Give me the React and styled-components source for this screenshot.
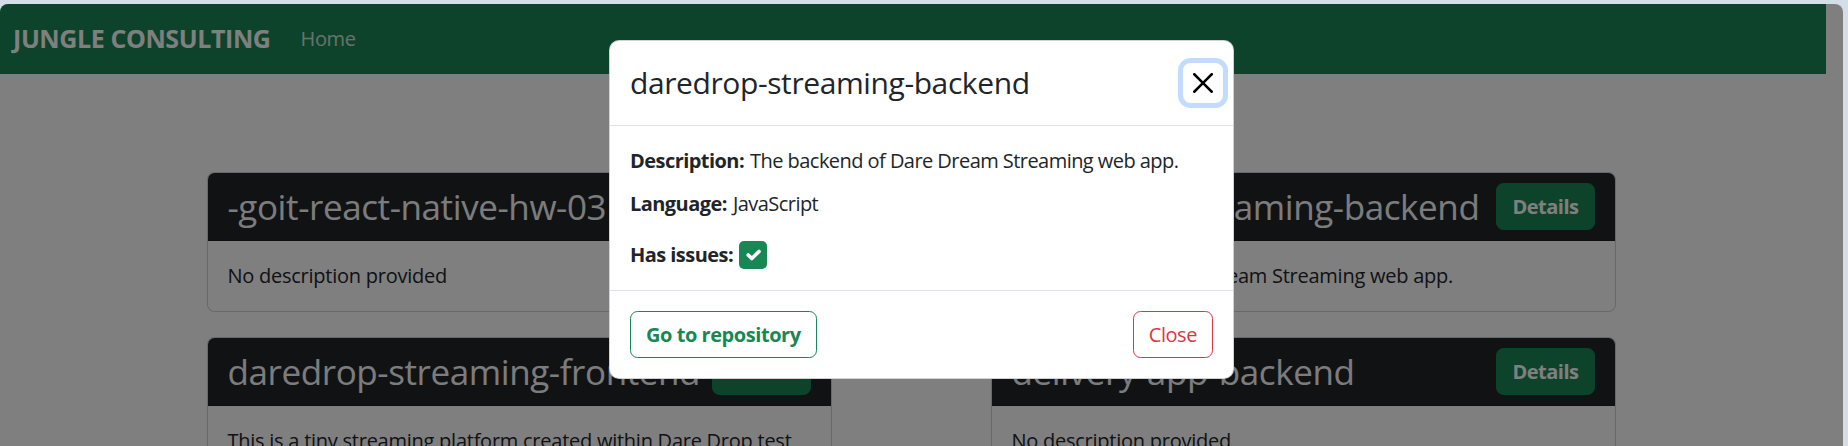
import React from 'react';
import styled, { createGlobalStyle } from 'styled-components';

const GlobalStyle = createGlobalStyle`
  html, body {
    margin: 0;
    padding: 0;
    background: #d4dee8;
    font-family: "Open Sans", "Noto Sans", sans-serif;
    color: #212529;
  }
  * { box-sizing: border-box; }
`;

const Screen = styled.div`
  position: relative;
  height: 442px;
  margin: 4px 5px 0 0;
  border-radius: 8px 8px 0 0;
  overflow: hidden;
  background: #fff;
`;

const Page = styled.div`
  padding-right: 17px;
`;

const Navbar = styled.nav`
  display: flex;
  align-items: center;
  height: 70px;
  padding: 0 13px;
  background: #198754;
`;

const Brand = styled.a`
  margin-right: 20px;
  font-size: 25px;
  font-weight: 700;
  line-height: 37.5px;
  letter-spacing: -0.4px;
  color: #fff;
  text-decoration: none;
`;

const NavLink = styled.a`
  padding: 0 10px;
  font-size: 20px;
  line-height: 30px;
  letter-spacing: -0.4px;
  color: rgba(255, 255, 255, 0.8);
  text-decoration: none;
`;

const CardGrid = styled.main`
  display: grid;
  grid-template-columns: 625px 625px;
  justify-content: center;
  column-gap: 159px;
  row-gap: 25px;
  padding: 98px 4px 0 0;
`;

const Card = styled.div`
  background: #fff;
  border: 1px solid rgba(0, 0, 0, 0.175);
  border-radius: 7.5px;
  overflow: hidden;
`;

const CardHeader = styled.div`
  display: flex;
  justify-content: space-between;
  align-items: center;
  gap: 12px;
  padding: 10px 20px;
  background: #212529;
  border-bottom: 1px solid rgba(0, 0, 0, 0.175);
`;

const CardTitle = styled.h3`
  margin: 0;
  font-size: 35px;
  font-weight: 500;
  line-height: 42px;
  letter-spacing: -0.4px;
  color: #f8f9fa;
  white-space: nowrap;
  overflow: hidden;
`;

const DetailsButton = styled.button`
  flex-shrink: 0;
  padding: 7.5px 15px;
  border: 1px solid #198754;
  border-radius: 7.5px;
  background: #198754;
  color: #fff;
  font-family: inherit;
  font-size: 20px;
  font-weight: 700;
  line-height: 30px;
  letter-spacing: -0.5px;
`;

const CardBody = styled.div`
  padding: 20px;
  font-size: 20px;
  line-height: 30px;
  letter-spacing: -0.25px;
  white-space: nowrap;
`;

const Backdrop = styled.div`
  position: absolute;
  inset: 0;
  background: rgba(0, 0, 0, 0.5);
`;

const ModalLayer = styled.div`
  position: absolute;
  inset: 0;
  display: flex;
  justify-content: center;
  align-items: flex-start;
  padding-top: 36px;
`;

const Dialog = styled.div`
  width: 625px;
  background: #fff;
  border: 1px solid rgba(0, 0, 0, 0.175);
  border-radius: 10px;
`;

const ModalHeader = styled.div`
  display: flex;
  align-items: center;
  padding: 20px;
  border-bottom: 1px solid #dee2e6;
`;

const ModalTitle = styled.h4`
  margin: 0;
  font-size: 30px;
  font-weight: 500;
  line-height: 44px;
  letter-spacing: -0.4px;
`;

const CloseButton = styled.button`
  display: flex;
  align-items: center;
  justify-content: center;
  width: 40px;
  height: 40px;
  margin: -10px -10px -10px auto;
  padding: 10px;
  border: 0;
  border-radius: 7.5px;
  background: transparent;
  box-shadow: 0 0 0 5px rgba(13, 110, 253, 0.25);
  color: #000;
`;

const ModalBody = styled.div`
  padding: 20px;
  font-size: 20px;
  line-height: 30px;
  letter-spacing: -0.55px;
`;

const Field = styled.p`
  display: flex;
  align-items: center;
  gap: 6px;
  margin: ${({ $check }) => ($check ? '21px 0 0' : '0 0 13px')};
`;

const Label = styled.strong`
  font-weight: 700;
`;

const CheckBox = styled.span`
  display: inline-flex;
  align-items: center;
  justify-content: center;
  width: 28px;
  height: 28px;
  border-radius: 5px;
  background: #198754;
`;

const ModalFooter = styled.div`
  display: flex;
  justify-content: space-between;
  align-items: center;
  padding: 15px;
  border-top: 1px solid #dee2e6;
`;

const OutlineButton = styled.button`
  margin: 5px;
  padding: 7.5px 15px;
  border: 1px solid ${({ $color }) => $color};
  border-radius: 7.5px;
  background: #fff;
  color: ${({ $color }) => $color};
  font-family: inherit;
  font-size: 20px;
  font-weight: ${({ $bold }) => ($bold ? 700 : 400)};
  line-height: 30px;
  letter-spacing: -0.45px;
`;

const repos = [
  { name: '-goit-react-native-hw-03', description: 'No description provided' },
  { name: 'daredrop-streaming-backend', description: 'The backend of Dare Dream Streaming web app.' },
  {
    name: 'daredrop-streaming-frontend',
    description: 'This is a tiny streaming platform created within Dare Drop test',
  },
  { name: 'delivery-app-backend', description: 'No description provided' },
];

const App = () => (
  <>
    <GlobalStyle />
    <Screen>
      <Page>
        <Navbar>
          <Brand href="#">JUNGLE CONSULTING</Brand>
          <NavLink href="#">Home</NavLink>
        </Navbar>

        <CardGrid>
          {repos.map((repo) => (
            <Card key={repo.name}>
              <CardHeader>
                <CardTitle>{repo.name}</CardTitle>
                <DetailsButton>Details</DetailsButton>
              </CardHeader>
              <CardBody>{repo.description}</CardBody>
            </Card>
          ))}
        </CardGrid>
      </Page>

      <Backdrop />

      <ModalLayer>
        <Dialog>
          <ModalHeader>
            <ModalTitle>daredrop-streaming-backend</ModalTitle>
            <CloseButton aria-label="Close">
              <svg width="20" height="20" viewBox="0 0 16 16" fill="currentColor">
                <path d="M.293.293a1 1 0 0 1 1.414 0L8 6.586 14.293.293a1 1 0 1 1 1.414 1.414L9.414 8l6.293 6.293a1 1 0 0 1-1.414 1.414L8 9.414l-6.293 6.293a1 1 0 0 1-1.414-1.414L6.586 8 .293 1.707a1 1 0 0 1 0-1.414z" />
              </svg>
            </CloseButton>
          </ModalHeader>

          <ModalBody>
            <Field>
              <Label>Description:</Label> The backend of Dare Dream Streaming web app.
            </Field>
            <Field>
              <Label>Language:</Label> JavaScript
            </Field>
            <Field $check>
              <Label>Has issues:</Label>
              <CheckBox>
                <svg width="24" height="24" viewBox="0 0 20 20">
                  <path d="m6 10 3 3 6-6" fill="none" stroke="#fff" strokeWidth="3" strokeLinecap="round" strokeLinejoin="round" />
                </svg>
              </CheckBox>
            </Field>
          </ModalBody>

          <ModalFooter>
            <OutlineButton $color="#198754" $bold>Go to repository</OutlineButton>
            <OutlineButton $color="#dc3545">Close</OutlineButton>
          </ModalFooter>
        </Dialog>
      </ModalLayer>
    </Screen>
  </>
);

export default App;
